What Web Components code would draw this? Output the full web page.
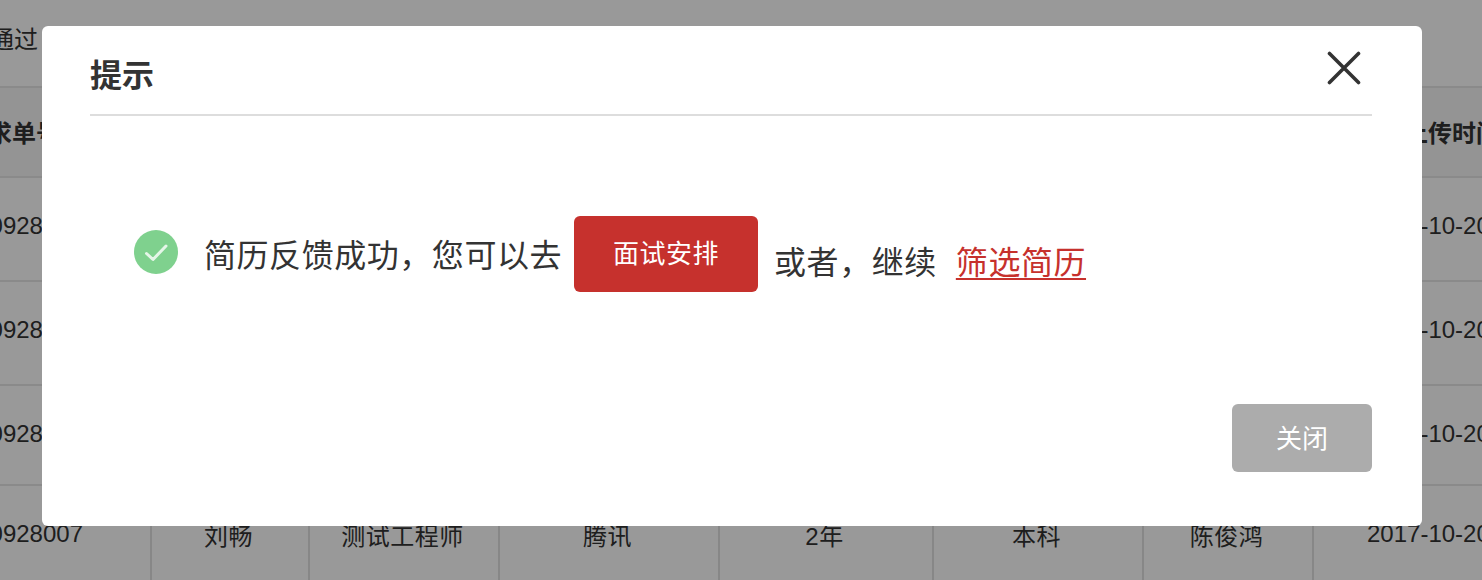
<!DOCTYPE html>
<html><head><meta charset="utf-8"><style>
html,body{margin:0;height:100%;overflow:hidden;background:#fff}
body{font-family:"Liberation Sans","Noto Sans CJK SC",sans-serif;color:#333}
</style></head><body>
<page-backdrop></page-backdrop>
<modal-overlay>
  <hint-dialog heading="提示">
    <result-line></result-line>
    <action-button slot="footer" tone="muted">关闭</action-button>
  </hint-dialog>
</modal-overlay>
<script>
const COLS='150px 158px 190px 220px 214px 210px 170px 170px';
class PageBackdrop extends HTMLElement{
  constructor(){super();const s=this.attachShadow({mode:'open'});
  const rows=[['0928010','','','','','','','2017-10-20'],['0928009','','','','','','','2017-10-20'],['0928008','','','','','','','2017-10-20'],['0928007','刘畅','测试工程师','腾讯','2年','本科','陈俊鸿','2017-10-20']];
  const heads=['需求单号','','','','','','','上传时间'];
  const cell=(t,i,c)=>`<div class="c ${c} c${i}">${t}</div>`;
  s.innerHTML=`<style>
  :host{display:block;width:1482px;height:580px;overflow:hidden;font-size:24px;line-height:28px;color:#333}
  .top{height:88px;display:flex;align-items:center;margin-left:-10px;padding-bottom:6px;box-sizing:border-box;border-bottom:2px solid #e6e6e6}
  .r{display:grid;grid-template-columns:${COLS};box-sizing:border-box;border-bottom:2px solid #e6e6e6}
  .h{height:90px;background:#f7f7f7;font-weight:700}
  .b{height:104px}
  .b.s{height:100px}
  .c{display:flex;align-items:flex-start;justify-content:center;box-sizing:border-box;border-left:2px solid #e2e2e2;white-space:nowrap;padding-top:34px}
  .c0{border-left:0;justify-content:flex-end;padding-right:67px}
  .c7{justify-content:flex-start;padding-left:53px}
  .h .c{border-left:0;padding-top:32px}
  .h .c0{padding-right:90px}
  .h .c7{padding-left:92px}
  .cjk{padding-top:37px;padding-right:3px;letter-spacing:.5px}
  </style>
  <div class="top">通过</div>
  <div class="r h">${heads.map((t,i)=>cell(t,i,'')).join('')}</div>
  ${rows.map((r,k)=>`<div class="r b ${k==2?'s':''}">${r.map((t,i)=>cell(t,i,(i>0&&i<7)?'cjk':'')).join('')}</div>`).join('')}`;
  }
}
class ModalOverlay extends HTMLElement{
  constructor(){super();this.attachShadow({mode:'open'}).innerHTML=`<style>
  :host{position:absolute;inset:0;background:rgba(0,0,0,.4);display:flex;align-items:flex-start;padding:26px 0 0 42px;box-sizing:border-box}
  </style><slot></slot>`;}
}
class HintDialog extends HTMLElement{
  constructor(){super();this.attachShadow({mode:'open'}).innerHTML=`<style>
  :host{display:flex;flex-direction:column;width:1380px;height:500px;box-sizing:border-box;padding:0 50px 54px 48px;background:#fff;border-radius:6px;color:#333}
  header{height:90px;flex:none;display:flex;align-items:center;justify-content:space-between;box-sizing:border-box;border-bottom:2px solid #ddd;padding-top:12px}
  h2{margin:0;font-size:32px;font-weight:700;line-height:40px;color:#333}
  svg{display:block;margin-right:11px;margin-top:-16px}
  main{flex:1;min-height:0}
  footer{display:flex;justify-content:flex-end}
  </style>
  <header><h2 id="t"></h2><svg width="34" height="34" viewBox="0 0 34 34" aria-label="关闭"><path d="M2.5 2.5 L31.5 31.5 M31.5 2.5 L2.5 31.5" stroke="#333" stroke-width="3.6" stroke-linecap="round" fill="none"/></svg></header>
  <main><slot></slot></main>
  <footer><slot name="footer"></slot></footer>`;}
  connectedCallback(){this.shadowRoot.getElementById('t').textContent=this.getAttribute('heading')||'';}
}
class ActionButton extends HTMLElement{
  constructor(){super();this.attachShadow({mode:'open'}).innerHTML=`<style>
  :host{display:inline-flex;align-items:center;justify-content:center;box-sizing:border-box;width:140px;height:68px;padding-bottom:3px;border-radius:6px;background:#acacac;color:#fff;font-size:26px}
  :host([tone=primary]){width:184px;height:76px;padding-bottom:0;background:#c6312d;font-size:26px;letter-spacing:.5px}
  </style><slot></slot>`;}
}
class ResultLine extends HTMLElement{
  constructor(){super();this.attachShadow({mode:'open'}).innerHTML=`<style>
  :host{display:flex;align-items:flex-start;padding:100px 0 0 44px;font-size:32px;line-height:44px;color:#333;white-space:nowrap;letter-spacing:.55px}
  svg{display:block;margin:14px 26px 0 0;flex:none}
  .a{margin:18px 12px 0 0}
  .b{margin:25px 0 0 16px}
  a{margin:25px 0 0 19px;color:#c6312d;text-decoration:underline;text-underline-offset:4px;text-decoration-thickness:2px}
  </style>
  <svg width="44" height="44" viewBox="0 0 44 44"><circle cx="22" cy="22" r="22" fill="#7fd18e"/><path d="M12.5 23.5 L19 29.5 L32 16" fill="none" stroke="#fff" stroke-opacity=".8" stroke-width="3" stroke-linecap="round" stroke-linejoin="round"/></svg>
  <span class="a">简历反馈成功，您可以去</span>
  <action-button tone="primary">面试安排</action-button>
  <span class="b">或者，继续</span>
  <a href="#">筛选简历</a>`;}
}
customElements.define('page-backdrop',PageBackdrop);
customElements.define('modal-overlay',ModalOverlay);
customElements.define('hint-dialog',HintDialog);
customElements.define('action-button',ActionButton);
customElements.define('result-line',ResultLine);
</script></body></html>
